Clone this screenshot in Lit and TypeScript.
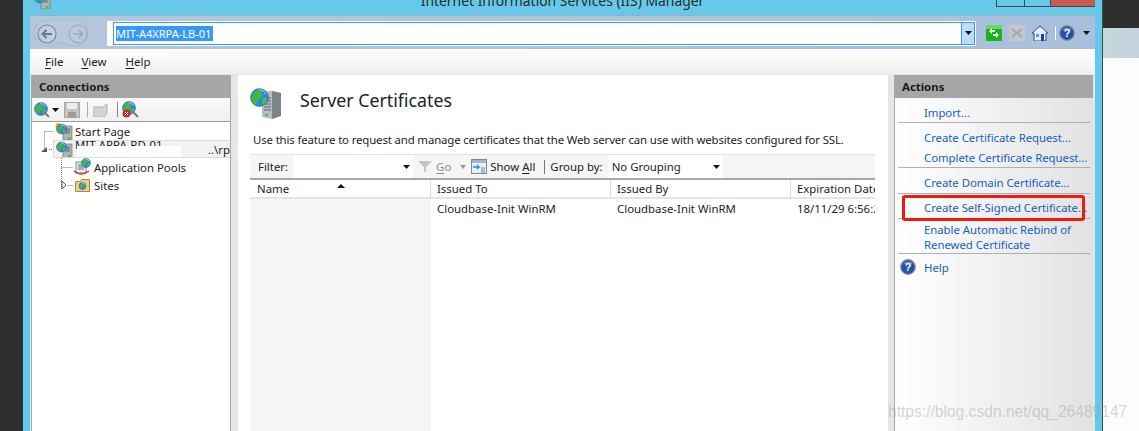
import { LitElement, html, css, svg } from "lit";
import { customElement } from "lit/decorators.js";

const globe = (x: number, y: number, r: number) => svg`
  <circle cx=${x} cy=${y} r=${r} fill="#2b88dc" stroke="#1d5a9e" stroke-width=".5"/>
  <path d="M${x - r * 0.7} ${y - r * 0.5}q${r * 0.6} ${-r * 0.5} ${r * 0.9} ${-r * 0.1}t${-r * 0.1} ${r * 0.7}t${-r * 0.5} ${r * 0.7}t${-r * 0.5} ${-r * 0.7}z" fill="#45b83a"/>
  <path d="M${x + r * 0.3} ${y + r * 0.1}q${r * 0.5} ${-r * 0.2} ${r * 0.5} ${r * 0.2}t${-r * 0.5} ${r * 0.5}z" fill="#58bb40"/>
  <path d="M${x - r * 0.1} ${y - r * 0.85}q${r * 0.6} 0 ${r * 0.8} ${r * 0.5}" stroke="#bfe4ff" stroke-width=".8" fill="none"/>`;

const serverIcon = (s: number) => html`<svg width=${s} height=${s} viewBox="0 0 32 32">
  <path d="M12 4l10-1 9 2v23l-9 3-10-2z" fill="#b9bdc0"/>
  <path d="M22 3l9 2v23l-9 3z" fill="#7d8488"/>
  <path d="M14 10h7M14 13h7M14 16h7M14 19h7M14 22h7" stroke="#5d6468" stroke-width="1.2"/>
  <rect x="15" y="26" width="3" height="2" fill="#3fc43a"/>
  ${globe(9.5, 9.5, 9)}
</svg>`;

const smallServer = (star = false) => html`<svg width="18" height="17" viewBox="0 0 18 17">
  <rect x="8" y="3" width="9" height="14" fill="#aeb3b7" stroke="#6e7478" stroke-width=".7"/>
  <path d="M10 6h5M10 8h5M10 10h5" stroke="#50565a" stroke-width=".8"/>
  <rect x="13" y="14" width="2.5" height="2" fill="#3fc43a"/>
  ${star ? svg`<circle cx="3" cy="2.5" r="2.5" fill="#f0b020"/>` : ""}
  ${globe(6.5, 6, 5)}
</svg>`;

const caret = html`<svg class="caret" width="7" height="4" viewBox="0 0 7 4"><path d="M0 0h7L3.5 4z" fill="#111"/></svg>`;

const helpIcon = html`<svg width="16" height="16" viewBox="0 0 16 16"><circle cx="8" cy="8" r="7.3" fill="#2450b0" stroke="#8a8f98" stroke-width="1.3"/><path d="M8 2.5a6 4 0 0 1 5 2.5H3a6 4 0 0 1 5-2.5z" fill="#6b8fdc"/><text x="8" y="12" font-size="11" font-weight="700" text-anchor="middle" fill="#fff" font-family="Liberation Sans">?</text></svg>`;

@customElement("app-root")
export class AppRoot extends LitElement {
  static styles = css`
    :host { display: block; width: 1139px; height: 431px; overflow: hidden; font-family: "Noto Sans", "Open Sans", sans-serif; font-size: 11.4px; color: #1c1c1c; }
    .screen { position: relative; display: flex; width: 1139px; height: 431px; overflow: hidden; background: #2e2e2e; }
    .darkstrip { width: 23px; flex: none; background: #2e2e2e; }
    .win { width: 1079px; flex: none; background: #66c9ea; padding: 0 7px 0 7px; box-sizing: border-box; display: flex; flex-direction: column; }
    .titlebar { height: 15px; flex: none; display: flex; position: relative; justify-content: center; overflow: hidden; }
    .title { font-size: 13.9px; line-height: 20px; margin-top: -9px; color: #2a2a2a; margin-left: 0; }
    .appicon { position: absolute; left: 3px; top: -8px; }
    .winbtns { position: absolute; left: 966px; top: 0; display: flex; height: 7px; }
    .winbtns i { display: block; height: 6px; border: 1px solid #3a4a50; border-top: 0; margin-right: -1px; background: #66c9ea; }
    .winbtns i.b1 { width: 27px; }
    .winbtns i.b2 { width: 25px; }
    .winbtns i.b3 { width: 45px; background: #c75b50; }
    .addr { height: 34px; flex: none; background: linear-gradient(90deg, #b3c6dc, #a9c0dd); border-top: 1px solid #98b0c4; box-sizing: border-box; display: flex; align-items: center; padding-left: 4px; }
    .nav { width: 54px; height: 26px; flex: none; margin-right: 19px; }
    .addrbox { width: 869px; height: 25px; flex: none; background: #fff; padding: 1px 1px 1px 6px; box-sizing: border-box; margin-top: 1px; }
    .addrin { height: 23px; border: 1px solid #3399ff; box-sizing: border-box; display: flex; align-items: center; padding-left: 2px; position: relative; }
    .sel { background: #3399ff; color: #fff; height: 15px; line-height: 15px; width: 97px; font-size: 11px; white-space: nowrap; overflow: hidden; }
    .dd { margin-left: auto; width: 12px; height: 21px; background: #bcdcff; border-left: 1px solid #3399ff; display: flex; align-items: center; justify-content: center; }
    .tools { display: flex; align-items: center; margin-left: 10px; }
    .tools svg { flex: none; }
    .vsep { width: 1px; height: 14px; background: #fff; margin: 0 3px 0 7px; }
    .menubar { height: 25px; flex: none; background: linear-gradient(#fff, #f0f0f0); display: flex; align-items: center; font-size: 11.5px; }
    .menubar span:nth-child(1) { margin-left: 15px; }
    .menubar span:nth-child(2) { margin-left: 18px; }
    .menubar span:nth-child(3) { margin-left: 19px; }
    u { text-underline-offset: 2px; }
    .panels { flex: 1; display: flex; background: #e6e6e6; padding-top: 1px; padding-left: 1px; min-height: 0; }
    .conn { width: 200px; flex: none; display: flex; flex-direction: column; border-right: 1px solid #a8a8a8; border-left: 1px solid #a8a8a8; box-sizing: border-box; }
    .ph { height: 23px; flex: none; background: #a6a6a6; font-weight: 700; font-size: 11.4px; line-height: 23px; padding-left: 7px; color: #1a1a1a; }
    .ctool { height: 24px; flex: none; background: linear-gradient(#fafafa, #f0f0f0); border-bottom: 1px solid #9a9a9a; display: flex; align-items: center; padding-left: 2px; box-sizing: border-box; }
    .ctool .cd { margin: 0 5px 0 2px; display: flex; }
    .ctool .s1 { width: 1px; height: 15px; background: #aaa; margin: 0 5px 0 7px; }
    .ctool .s2 { width: 1px; height: 15px; background: #888; margin: 0 4px 0 9px; }
    .tree { flex: 1; background: #fff; position: relative; padding-top: 1px; }
    .treelines { position: absolute; left: 0; top: 0; }
    .row { display: flex; align-items: center; height: 18px; white-space: nowrap; overflow: hidden; position: relative; }
    .row svg { flex: none; }
    .r1 { padding-left: 23px; gap: 2px; height: 17px; }
    .r2 { margin-left: 21px; padding-left: 1px; background: #f2f2f2; border: 1px solid #dcdcdc; border-right: 0; box-sizing: border-box; gap: 2px; }
    .r2 .rt { margin-top: -9px; }
    .mask { position: absolute; left: 23px; top: 5px; width: 104px; height: 12px; background: #fff; }
    .end { position: absolute; right: 0; top: 0; line-height: 17px; background: #f2f2f2; }
    .r3 { padding-left: 40px; gap: 2px; }
    .r4 { padding-left: 43px; gap: 4px; }
    .center { width: 650px; flex: none; margin-left: 7px; background: #fff; display: flex; flex-direction: column; padding: 12px 13px 0 12px; box-sizing: border-box; }
    .head { display: flex; align-items: center; height: 33px; flex: none; gap: 18px; }
    .h1 { font-size: 17.8px; color: #222; margin-top: -8px; }
    .desc { margin: 12px 0 0 3px; height: 16px; line-height: 16px; white-space: nowrap; flex: none; letter-spacing: -.135px; }
    .list { margin-top: 6px; flex: 1; display: flex; flex-direction: column; min-height: 0; }
    .ltool { height: 26px; flex: none; background: #f5f5f5; border-top: 1px solid #e4e4e4; border-bottom: 2px solid #a8a8a8; box-sizing: border-box; display: flex; align-items: center; padding-left: 8px; white-space: nowrap; }
    .finput { width: 120px; height: 23px; background: #fff; margin-left: 5px; display: flex; align-items: center; justify-content: flex-end; padding-right: 3px; box-sizing: border-box; }
    .go { color: #8d8d8d; margin-left: 4px; }
    .lsep { width: 1px; height: 14px; background: #777; margin: 0 5px 0 9px; }
    .gsel { width: 115px; height: 23px; background: #fff; margin-left: 5px; display: flex; align-items: center; justify-content: space-between; padding: 0 3px 0 4px; box-sizing: border-box; }
    .cols { display: grid; grid-template-columns: 181px 180px 180px 84px; flex: 1; min-height: 0; overflow: hidden; }
    .col { display: flex; flex-direction: column; white-space: nowrap; overflow: hidden; }
    .col.sorted { background: #f5f5f5; }
    .ch { height: 19px; flex: none; background: #fff; border-right: 1px solid #dcdcdc; border-bottom: 2px solid #e4e4e4; box-sizing: border-box; padding-left: 6px; line-height: 18px; position: relative; }
    .col.sorted .ch { padding-left: 7px; }
    .col:last-child .ch { border-right: 0; }
    .sort { position: absolute; left: 87px; top: 4px; }
    .cell { height: 20px; line-height: 20px; padding-left: 6px; }
    .actions { width: 199px; flex: none; margin-left: 6px; border-left: 1px solid #a8a8a8; box-sizing: border-box; display: flex; flex-direction: column; }
    .abody { flex: 1; background: linear-gradient(90deg, #fff, #e2e2e2); color: #1360c8; letter-spacing: -.05px; }
    .grp { margin: 0 3px; padding: 0 0 0 26px; line-height: 15px; border-bottom: 1px solid #b0b0b0; white-space: nowrap; box-sizing: border-box; }
    .g1 { height: 25px; padding-top: 7px; }
    .g2 { height: 45px; padding-top: 7px; }
    .g2 div + div { margin-top: 5px; }
    .g3 { height: 26px; padding-top: 7px; }
    .g4 { height: 25px; padding-top: 6px; }
    .g5 { height: 35px; padding-top: 3px; }
    .g6 { border: 0; padding: 5px 0 0 2px; display: flex; align-items: center; gap: 8px; }
    .rblock { flex: 1; background: #fcfcfc; position: relative; }
    .rtop { height: 28px; background: #2e2e2e; }
    .rhead { height: 30px; background: linear-gradient(90deg, #c3dad9, #c5d2e0); }
    .rightcol { flex: 1; border-left: 1px solid #4a4a4a; display: flex; flex-direction: column; }
    .redbox { position: absolute; left: 902px; top: 195px; width: 183px; height: 26px; border: 3px solid #f01a10; border-radius: 3px; box-sizing: border-box; }
    .mark { position: absolute; left: 888px; top: 403px; font-family: "Liberation Sans", sans-serif; font-size: 15.6px; color: rgba(150,150,150,.4); white-space: nowrap; }
  `;

  render() {
    return html`<div class="screen">
      <div class="darkstrip"></div>
      <div class="win">
        <div class="titlebar">
          <span class="appicon">${smallServer()}</span>
          <span class="title">Internet Information Services (IIS) Manager</span>
          <div class="winbtns"><i class="b1"></i><i class="b2"></i><i class="b3"></i></div>
        </div>
        <div class="addr">
          <svg class="nav" viewBox="0 0 54 26">
            <path d="M13 0h28c7 0 13 6 13 13s-6 13-13 13c-6 0-8-3-14-3s-8 3-14 3C6 26 0 20 0 13S6 0 13 0z" fill="#b9c9dd" stroke="#a8b8cb"/>
            <circle cx="13" cy="14" r="9" fill="#c2cfdf" stroke="#7f8a96" stroke-width="1.2"/>
            <path d="M18 14H9M12.5 10l-4 4 4 4" stroke="#6d7a88" stroke-width="2" fill="none"/>
            <circle cx="44" cy="14" r="9" fill="#bac8da" stroke="#98a6b6"/>
            <path d="M39 14h9M44.5 10l4 4-4 4" stroke="#9dabbb" stroke-width="1.6" fill="none"/>
          </svg>
          <div class="addrbox"><div class="addrin"><span class="sel">MIT-A4XRPA-LB-01</span><span class="dd">${caret}</span></div></div>
          <div class="tools">
            <svg width="16" height="16" viewBox="0 0 16 16"><rect width="16" height="16" fill="#16b416"/><rect y="0" width="16" height="4" fill="#5ce05c"/><path d="M3 6l3-3v2h3v2H6v2zM13 10l-3 3v-2H7V9h3V7z" fill="#fff"/></svg>
            <svg style="margin-left:7px" width="16" height="16" viewBox="0 0 16 16"><rect width="16" height="16" fill="#c3c6cc"/><path d="M3 4l10 8M13 4L3 12" stroke="#a4a9b0" stroke-width="2.2"/></svg>
            <svg style="margin-left:7px" width="16" height="16" viewBox="0 0 16 16"><path d="M8 1L0 8h2v8h12V8h2z" fill="#e6ecf4" stroke="#2b4f9c" stroke-width="1"/><rect x="9" y="9" width="3" height="7" fill="#25408f"/><rect x="4" y="9" width="3" height="3" fill="#6f93cc"/></svg>
            <span class="vsep"></span>
            ${helpIcon}
            <span style="margin-left:8px;display:flex">${caret}</span>
          </div>
        </div>
        <div class="menubar">
          <span><u>F</u>ile</span><span><u>V</u>iew</span><span><u>H</u>elp</span>
        </div>
        <div class="panels">
          <div class="conn">
            <div class="ph">Connections</div>
            <div class="ctool">
              <svg width="16" height="16" viewBox="0 0 16 16">${globe(7, 7, 6.5)}<path d="M10 10l5 5" stroke="#777" stroke-width="2"/></svg>
              <span class="cd">${caret}</span>
              <svg width="16" height="16" viewBox="0 0 16 16"><rect x=".5" y=".5" width="15" height="15" fill="#c4c4c4" stroke="#a6a6a6"/><rect x="3" y="1" width="10" height="6" fill="#eee"/><rect x="4" y="10" width="8" height="5" fill="#9c9c9c"/></svg>
              <span class="s1"></span>
              <svg width="15" height="14" viewBox="0 0 15 14"><path d="M0 4h10l4-3v9l-3 4H0z" fill="#d4d4d4" stroke="#b4b4b4"/></svg>
              <span class="s2"></span>
              <svg width="17" height="17" viewBox="0 0 17 17">${globe(7, 7, 6.5)}<path d="M10 10l6 6" stroke="#777" stroke-width="2"/><circle cx="4.5" cy="12.5" r="4" fill="#d8262c"/><path d="M3 11l3 3M6 11l-3 3" stroke="#fff"/></svg>
            </div>
            <div class="tree">
              <svg class="treelines" width="60" height="80" viewBox="0 0 60 80">
                <path d="M12.5 9.5h10M12.5 9.5v18M17 27.5h4M29.5 36v32M29.5 45.5h12M35.5 63.5h6" stroke="#777" stroke-dasharray="1 1" fill="none"/>
                <path d="M9 30l6-5v5z" fill="#555"/>
                <path d="M30 59l4 4-4 4z" fill="#fff" stroke="#333" stroke-width=".8"/>
              </svg>
              <div class="row r1">${smallServer(true)}<span>Start Page</span></div>
              <div class="row r2">${smallServer()}<span class="rt">MIT-ARPA-RD-01</span><span class="mask"></span><span class="end">..\\rp</span></div>
              <div class="row r3">
                <svg width="20" height="18" viewBox="0 0 20 18"><rect x="4" y="4" width="10" height="11" fill="#e8e8e8" stroke="#8a8a8a"/><path d="M6 7h6M6 9h6M6 11h6" stroke="#5577aa"/><path d="M2 13q7 6 15 0" stroke="#cc3333" stroke-width="1.5" fill="none"/>${globe(14, 5, 4.5)}</svg>
                <span>Application Pools</span>
              </div>
              <div class="row r4">
                <svg width="15" height="14" viewBox="0 0 15 14"><path d="M.5 3.5h5l1-2h8v12H.5z" fill="#f0d080" stroke="#b08a30"/>${globe(7.5, 8, 3.5)}</svg>
                <span>Sites</span>
              </div>
            </div>
          </div>
          <div class="center">
            <div class="head">${serverIcon(32)}<span class="h1">Server Certificates</span></div>
            <div class="desc">Use this feature to request and manage certificates that the Web server can use with websites configured for SSL.</div>
            <div class="list">
              <div class="ltool">
                <span>Filter:</span>
                <span class="finput">${caret}</span>
                <svg style="margin-left:5px" width="14" height="12" viewBox="0 0 14 12"><path d="M0 0h14L8 6v6L6 10V6z" fill="#c4c4c4"/></svg>
                <span class="go"><u>G</u>o</span>
                <svg style="margin:0 5px 0 9px" width="6" height="4" viewBox="0 0 6 4"><path d="M0 0h6L3 4z" fill="#999"/></svg>
                <svg width="16" height="15" viewBox="0 0 16 15"><rect x=".5" y=".5" width="15" height="14" fill="#eaf0f6" stroke="#6f8ba8"/><rect x="1" y="1" width="14" height="3" fill="#9db8d2"/><path d="M2 8h6l-2-2M8 8l-2 2" stroke="#2d8fd5" stroke-width="1.4" fill="none"/><path d="M10 9h4M10 11h4M10 13h4" stroke="#667" stroke-width=".8"/></svg>
                <span style="margin-left:3px">Show <u>A</u>ll</span>
                <span class="lsep"></span>
                <span>Group by:</span>
                <span class="gsel"><span>No Grouping</span>${caret}</span>
              </div>
              <div class="cols">
                <div class="col sorted"><div class="ch">Name<svg class="sort" width="8" height="4" viewBox="0 0 8 4"><path d="M0 4h8L4 0z" fill="#111"/></svg></div></div>
                <div class="col"><div class="ch">Issued To</div><div class="cell">Cloudbase-Init WinRM</div></div>
                <div class="col"><div class="ch">Issued By</div><div class="cell">Cloudbase-Init WinRM</div></div>
                <div class="col"><div class="ch">Expiration Date</div><div class="cell">18/11/29 6:56:24</div></div>
              </div>
            </div>
          </div>
          <div class="actions">
            <div class="ph">Actions</div>
            <div class="abody">
              <div class="grp g1">Import...</div>
              <div class="grp g2"><div>Create Certificate Request...</div><div>Complete Certificate Request...</div></div>
              <div class="grp g3">Create Domain Certificate...</div>
              <div class="grp g4">Create Self-Signed Certificate...</div>
              <div class="grp g5"><div>Enable Automatic Rebind of</div><div>Renewed Certificate</div></div>
              <div class="grp g6">${helpIcon}<span>Help</span></div>
            </div>
          </div>
        </div>
      </div>
      <div class="rightcol">
        <div class="rtop"></div>
        <div class="rhead"></div>
        <div class="rblock"></div>
      </div>
      <div class="redbox"></div>
      <div class="mark">https://blog.csdn.net/qq_26489147</div>
    </div>`;
  }
}
